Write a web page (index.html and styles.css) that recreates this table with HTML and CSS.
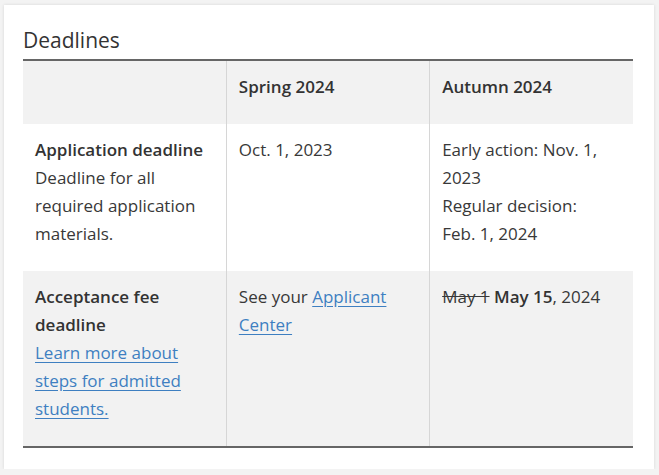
FILE: index.html
```html
<!DOCTYPE html>
<html lang="en">
<head>
<meta charset="utf-8">
<title>Deadlines</title>
<link rel="stylesheet" href="styles.css">
</head>
<body>
<section class="card">
  <h2 class="title">Deadlines</h2>
  <table class="deadlines">
    <thead>
      <tr>
        <th class="blank"></th>
        <th>Spring 2024</th>
        <th>Autumn 2024</th>
      </tr>
    </thead>
    <tbody>
      <tr class="row-white">
        <td><strong>Application deadline</strong><br>Deadline for all required application materials.</td>
        <td>Oct. 1, 2023</td>
        <td><span class="line">Early action: Nov. 1, 2023</span><span class="line">Regular decision:</span><span class="line">Feb. 1, 2024</span></td>
      </tr>
      <tr class="row-gray">
        <td><strong>Acceptance fee deadline</strong><br><a href="#">Learn more about steps for admitted students.</a></td>
        <td>See your <a href="#">Applicant Center</a></td>
        <td><s>May 1</s> <strong>May 15</strong>, 2024</td>
      </tr>
    </tbody>
  </table>
</section>
</body>
</html>
```
FILE: styles.css
```css
html, body {
  margin: 0;
  padding: 0;
}
body {
  background: #f3f3f3;
  font-family: "Open Sans", "Liberation Sans", sans-serif;
  color: #383838;
  padding: 5px 0 0 4px;
}
.card {
  width: 611px;
  background: #ffffff;
  padding: 23px 20px 21px 19px;
  box-shadow: 0 0 3px rgba(0,0,0,0.12);
}
.title {
  margin: 0 0 6px 0;
  font-size: 21px;
  line-height: 25px;
  font-weight: 500;
  color: #333;
}
.deadlines {
  width: 610px;
  border-collapse: collapse;
  table-layout: fixed;
  border-top: 2px solid #666;
  border-bottom: 2px solid #666;
  font-size: 17px;
  line-height: 28px;
}
.deadlines th,
.deadlines td {
  text-align: left;
  vertical-align: top;
  padding: 12px 12px 23px 12px;
  border-left: 1px solid #d6d6d6;
}
.deadlines th:first-child,
.deadlines td:first-child {
  border-left: none;
}
.deadlines th {
  font-weight: 600;
  background: #f2f2f2;
  color: #333;
}
.row-white td {
  background: #ffffff;
}
.row-gray td {
  background: #f2f2f2;
}
.deadlines strong {
  font-weight: 600;
  color: #333;
}
.line {
  display: block;
}
a {
  color: #3e7fc1;
  text-decoration: underline;
  text-underline-offset: 3px;
}
s {
  color: #383838;
}
```
